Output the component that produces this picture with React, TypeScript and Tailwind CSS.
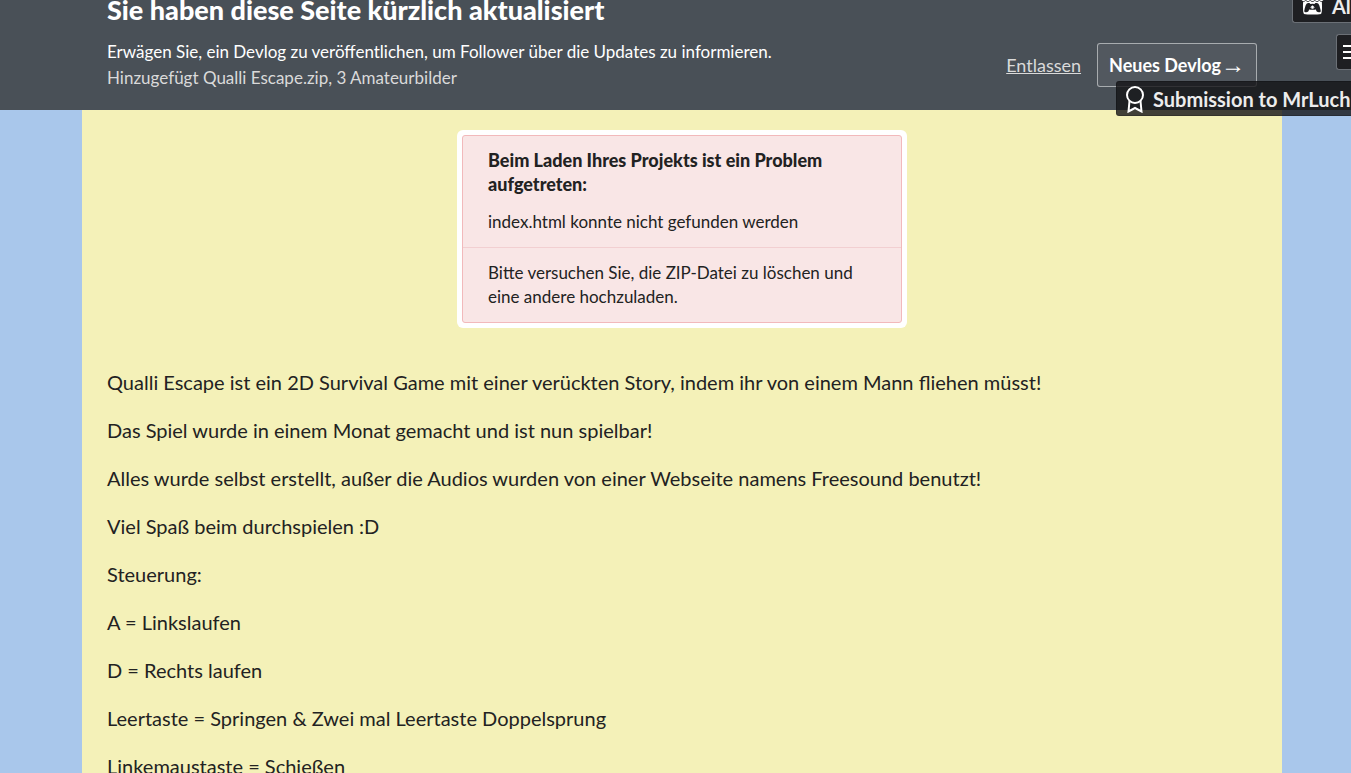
import { FaItchIo } from 'react-icons/fa'

const paragraphs = [
  'Qualli Escape ist ein 2D Survival Game mit einer verückten Story, indem ihr von einem Mann fliehen müsst!',
  'Das Spiel wurde in einem Monat gemacht und ist nun spielbar!',
  'Alles wurde selbst erstellt, außer die Audios wurden von einer Webseite namens Freesound benutzt!',
  'Viel Spaß beim durchspielen :D',
  'Steuerung:',
  'A = Linkslaufen',
  'D = Rechts laufen',
  'Leertaste = Springen & Zwei mal Leertaste Doppelsprung',
  'Linkemaustaste = Schießen',
]

export default function App() {
  return (
    <div className="relative min-h-screen overflow-hidden bg-[#a9c7eb] font-['Lato',sans-serif] text-[#222222]">
      <UpdateBanner />
      <UserTools />

      <main className="ml-[82px] mr-[69px] bg-[#f4f1b8] px-[25px] pt-5">
        <LoadError />
        <div className="mt-[42px] space-y-6 pb-6 text-xl leading-6">
          {paragraphs.map(text => (
            <p key={text}>{text}</p>
          ))}
        </div>
      </main>
    </div>
  )
}

function UpdateBanner() {
  return (
    <header className="flex items-end justify-between bg-[#495057] pl-[107px] pr-[94px] text-white">
      <div className="pb-[19px]">
        <h2 className="text-[27px] font-black leading-5">Sie haben diese Seite kürzlich aktualisiert</h2>
        <p className="mt-[19px] text-[17px] leading-[26px]">
          Erwägen Sie, ein Devlog zu veröffentlichen, um Follower über die Updates zu informieren.
        </p>
        <p className="text-[17px] leading-[26px] text-[#dadada]">Hinzugefügt Qualli Escape.zip, 3 Amateurbilder</p>
      </div>
      <div className="flex items-center gap-4 pb-[23px] text-lg">
        <a href="#" className="text-[#dadada] underline">Entlassen</a>
        <a href="#" className="flex h-11 items-center rounded-[3px] border border-white/50 bg-white/5 px-[11px] font-bold">
          Neues Devlog
          <span className="font-['Liberation_Sans',sans-serif] text-2xl font-normal">→</span>
        </a>
      </div>
    </header>
  )
}

// Buttons pinned to the right edge, they run past the window
function UserTools() {
  return (
    <div className="absolute right-0 top-0 flex flex-col items-end text-xl font-bold text-[#ececec]">
      <a href="#" className="flex h-[23px] w-[59px] items-end gap-2 overflow-hidden whitespace-nowrap rounded-bl-[3px] border-b border-l border-[#6b7076] bg-[#1e1f22] pl-2">
        <FaItchIo className="mb-[6px] size-[23px] shrink-0 text-white" />
        <span className="mb-[2px] leading-[28px]">Al</span>
      </a>
      <button
        type="button"
        aria-label="Menu"
        className="mt-[11px] flex h-9 w-[15px] items-center overflow-hidden rounded-l-[3px] border-y border-l border-[#6b7076] bg-[#1e1f22] pl-[6px]"
      >
        <svg viewBox="0 0 20 16" className="h-4 w-5 shrink-0" fill="none" stroke="#fff" strokeWidth="2">
          <path d="M0 2h20M0 8h20M0 14h20" />
        </svg>
      </button>
      <a href="#" className="mt-[11px] flex h-[35px] w-[235px] items-center gap-2 overflow-hidden whitespace-nowrap rounded-l-[3px] border-y border-l border-black/20 bg-[#141416]/80 pl-2">
        <RibbonIcon />
        <span>Submission to MrLuch</span>
      </a>
    </div>
  )
}

function RibbonIcon() {
  return (
    <svg viewBox="0 0 20 28" className="h-7 w-5 shrink-0" fill="none" stroke="#fff" strokeWidth="2">
      <circle cx="10" cy="10" r="8" />
      <path d="M4.5 16L3.5 26.5L10 23L16.5 26.5L15.5 16" />
    </svg>
  )
}

function LoadError() {
  return (
    <section className="mx-auto max-w-[450px] rounded-md bg-white p-[5px] text-[17px] leading-6">
      <div className="rounded-[3px] border border-[#f2b9bb] bg-[#f9e6e6]">
        <div className="border-b border-[#f2cfd1] px-[25px] pb-[13px] pt-3">
          <p className="text-lg font-black leading-6">Beim Laden Ihres Projekts ist ein Problem aufgetreten:</p>
          <p className="mt-[14px]">index.html konnte nicht gefunden werden</p>
        </div>
        <p className="px-[25px] py-[13px]">Bitte versuchen Sie, die ZIP-Datei zu löschen und eine andere hochzuladen.</p>
      </div>
    </section>
  )
}
